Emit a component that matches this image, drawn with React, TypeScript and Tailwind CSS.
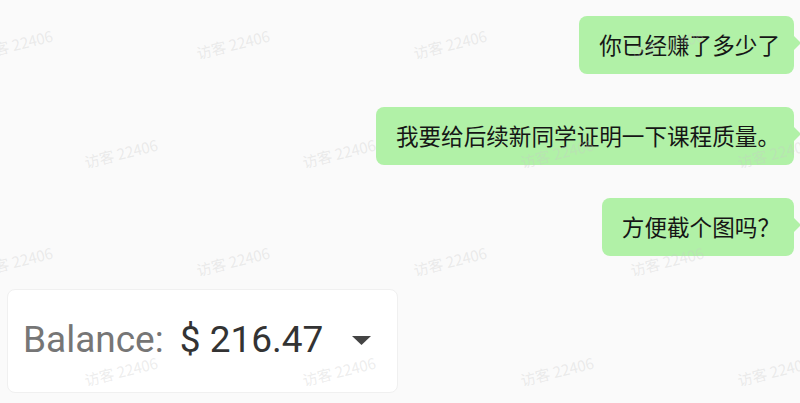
import React from "react";

const cjk = { fontFamily: '"Noto Sans CJK SC", "Noto Sans", sans-serif' };

function Bubble({ text }: { text: string }) {
  return (
    <div className="relative rounded-lg bg-[#b1f1a7] pl-[20px] pr-[14px] py-[12px] text-[22.6px] leading-[34px] text-[#161616]" style={cjk}>
      {text}
      <div className="absolute right-[-7px] top-[20px] h-0 w-0 border-y-[7px] border-l-[7px] border-y-transparent border-l-[#b1f1a7]" />
    </div>
  );
}

const rowsA = [44, 261];
const rowsB = [153, 371];
const colsA = [16, 233, 450, 667];
const colsB = [121, 339, 557, 774];
const marks: { x: number; y: number }[] = [];
rowsA.forEach((y) => colsA.forEach((x) => marks.push({ x, y })));
rowsB.forEach((y) => colsB.forEach((x) => marks.push({ x, y })));

export default function App() {
  return (
    <div className="relative flex h-[403px] w-full flex-col overflow-hidden bg-[#fafafa]">
      <div className="flex flex-col items-end gap-[33px] pr-[6px] pt-4">
        <Bubble text="你已经赚了多少了" />
        <Bubble text="我要给后续新同学证明一下课程质量。" />
        <Bubble text="方便截个图吗？" />
      </div>
      <div
        className="ml-[7px] mt-[33px] flex h-[104px] w-[391px] items-center rounded-lg border border-[#f0f0f0] bg-white pb-1 pl-[15px]"
        style={{ fontFamily: 'Roboto, "Liberation Sans", sans-serif' }}
      >
        <span className="text-[37px] leading-none text-[#767676]">Balance:</span>
        <span className="ml-[16px] text-[37px] leading-none text-[#333333]">$ 216.47</span>
        <svg className="ml-[29px] mt-1" width="19" height="10" viewBox="0 0 19 10">
          <polygon points="0,0 19,0 9.5,9" fill="#444444" />
        </svg>
      </div>
      <div className="pointer-events-none absolute inset-0 z-10">
        {marks.map((m, i) => (
          <span
            key={i}
            className="absolute -translate-x-1/2 -translate-y-1/2 rotate-[-14deg] whitespace-nowrap text-[15px] leading-none text-[rgba(200,200,200,0.32)]"
            style={{ left: m.x, top: m.y, ...cjk }}
          >
            访客 22406
          </span>
        ))}
      </div>
    </div>
  );
}
